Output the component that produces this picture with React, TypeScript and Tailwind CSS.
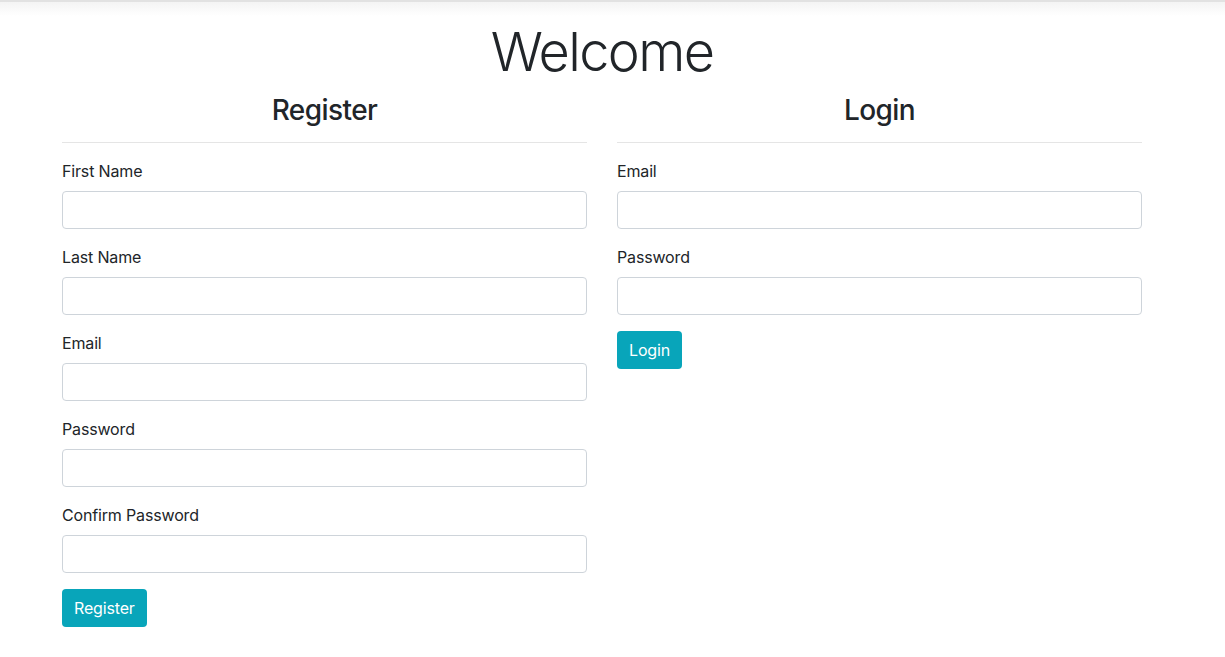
const registerFields = ["First Name", "Last Name", "Email", "Password", "Confirm Password"];
const loginFields = ["Email", "Password"];

function Field({ label }: { label: string }) {
  return (
    <div className="mb-4">
      <label className="block mb-2 text-base leading-6 tracking-[-0.01em] text-[#212529]">{label}</label>
      <input
        type={label.includes("Password") ? "password" : "text"}
        className="block w-full h-[38px] px-3 border border-[#ced4da] rounded bg-white outline-none"
      />
    </div>
  );
}

function Panel({ title, fields, button }: { title: string; fields: string[]; button: string }) {
  return (
    <div>
      <h3 className="text-center text-[28px] font-medium leading-[1.2] tracking-[-0.02em] text-[#212529] mt-[9px] mb-2">
        {title}
      </h3>
      <hr className="mt-[15px] mb-4 border-t border-[rgba(0,0,0,0.1)]" />
      <form onSubmit={(e) => e.preventDefault()}>
        {fields.map((f) => (
          <Field key={f} label={f} />
        ))}
        <button
          type="submit"
          className="h-[38px] px-3 rounded bg-[#08a5ba] text-white text-base leading-6 tracking-[-0.01em]"
        >
          {button}
        </button>
      </form>
    </div>
  );
}

export default function App() {
  return (
    <div className="min-h-screen bg-white font-['Inter','Noto_Sans',sans-serif] text-[#212529]">
      <div className="h-[16px] border-t-2 border-[#e2e2e2] bg-gradient-to-b from-[#f4f4f4] to-white" />
      <div className="w-[1080px] ml-[62px]">
        <h1 className="text-center text-[54px] font-light leading-[1.2] tracking-[-0.03em] mt-[4px]">Welcome</h1>
        <div className="grid grid-cols-[525px_525px] gap-x-[30px]">
          <Panel title="Register" fields={registerFields} button="Register" />
          <Panel title="Login" fields={loginFields} button="Login" />
        </div>
      </div>
    </div>
  );
}
